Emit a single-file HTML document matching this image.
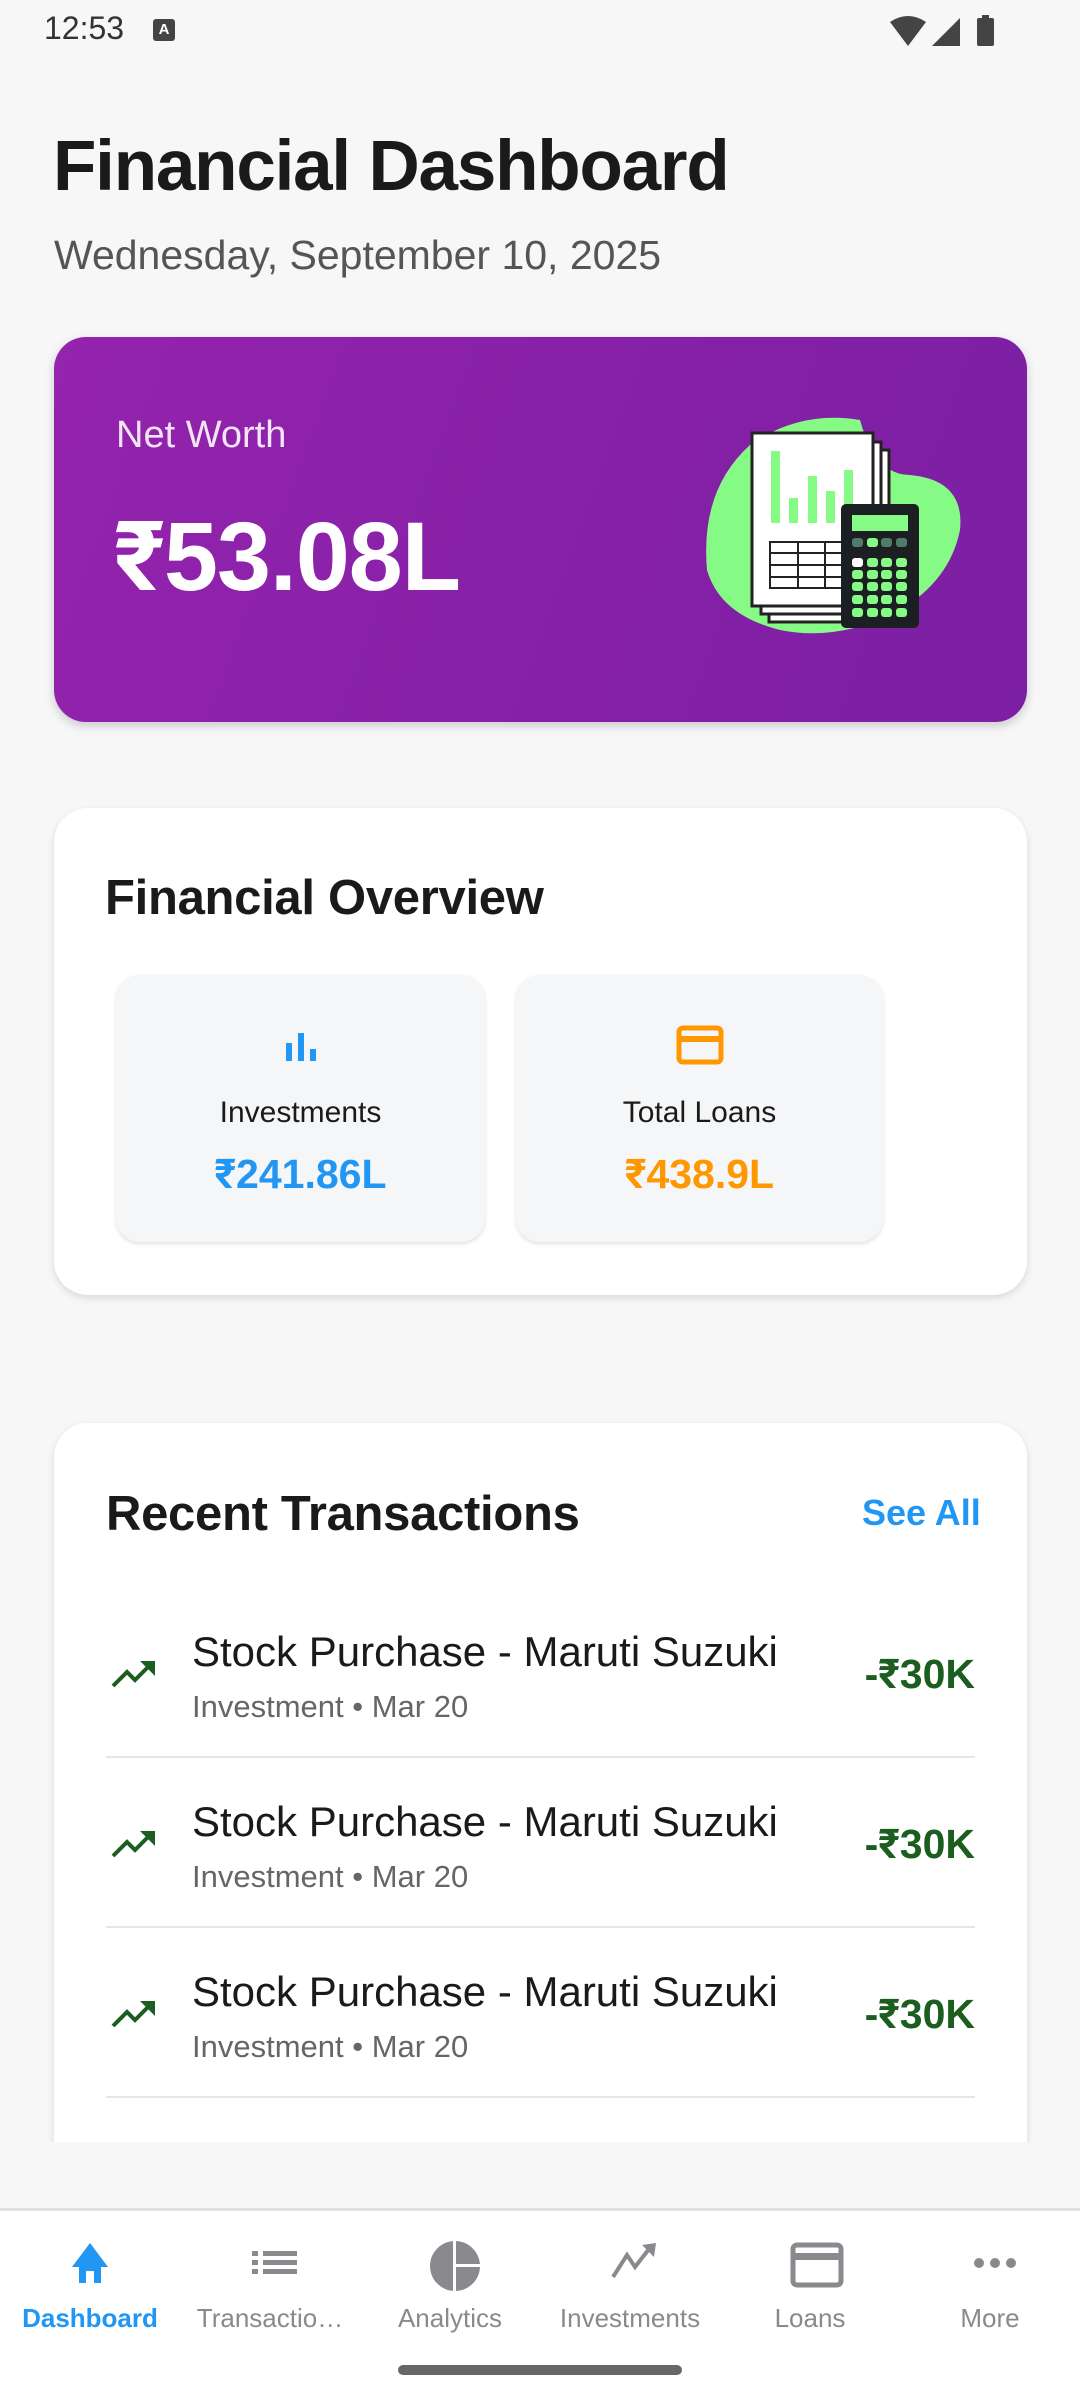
<!DOCTYPE html>
<html><head><meta charset="utf-8"><style>
*{margin:0;padding:0;box-sizing:border-box}
body{width:1080px;height:2400px;background:#f7f7f8;font-family:"Liberation Sans",Roboto,sans-serif;position:relative;overflow:hidden;color:#1a1a1a}
.abs{position:absolute}
.card{position:absolute;background:#fff;border-radius:34px;box-shadow:0 3px 8px rgba(0,0,0,.12)}
.box{position:absolute;background:#f5f6f8;border-radius:24px;box-shadow:0 2px 4px rgba(0,0,0,.12);text-align:center}
.row{position:absolute;left:54px;width:973px;height:170px}
.row .t{position:absolute;left:138px;top:40px;font-size:42px;color:#1a1a1a}
.row .s{position:absolute;left:138px;top:101px;font-size:31px;color:#666}
.row .a{position:absolute;right:52px;top:63px;font-size:41px;font-weight:bold;color:#1b5e20}
.row .i{position:absolute;left:56px;top:72px}
.row .d{position:absolute;left:52px;right:52px;bottom:0;height:2px;background:#e6e6e6}
.nav{position:absolute;top:2208px;left:0;width:1080px;height:192px;background:#fff;border-top:3px solid #e0e0e0}
.ni{position:absolute;top:0;width:180px;text-align:center}
.ni svg{position:absolute;left:70px;top:30px}
.ni span{position:absolute;top:92px;left:0;width:180px;font-size:26px;color:#8a8a8e}
</style></head><body>
<div class="abs" style="left:44px;top:10px;font-size:32px;color:#333">12:53</div>
<div class="abs" style="left:153px;top:19px;width:22px;height:22px;background:#444;border-radius:3px;color:#fff;font-size:15px;font-weight:bold;text-align:center;line-height:22px">A</div>
<svg class="abs" style="left:888px;top:14px" width="120" height="34" viewBox="0 0 120 34"><path d="M2 8 Q20 -4 38 8 L20 32Z" fill="#444"/><path d="M44 32 L72 4 L72 32Z" fill="#444"/><rect x="89" y="4" width="17" height="28" rx="2" fill="#444"/><rect x="94" y="1" width="7" height="4" fill="#444"/></svg>

<div class="abs" style="left:53px;top:126px;font-size:71px;font-weight:bold;letter-spacing:-1.2px">Financial Dashboard</div>
<div class="abs" style="left:54px;top:232px;font-size:41px;color:#555">Wednesday, September 10, 2025</div>

<div class="abs" style="left:54px;top:337px;width:973px;height:385px;border-radius:32px;background:linear-gradient(110deg,#9423ad,#7b1fa2);box-shadow:0 4px 10px rgba(0,0,0,.18)"></div>
<div class="abs" style="left:116px;top:414px;font-size:38px;color:#f3e5f5">Net Worth</div>
<div class="abs" style="left:114px;top:500px;font-size:97px;font-weight:bold;color:#fff;letter-spacing:-1px">₹53.08L</div>
<svg class="abs" style="left:680px;top:380px" width="320" height="280" viewBox="0 0 320 280">
<path d="M70 65 Q120 30 180 40 Q195 95 230 95 Q285 100 280 150 Q270 200 220 230 Q160 262 100 250 Q40 235 27 190 Q20 110 70 65Z" fill="#85fa85"/>
<rect x="89" y="70" width="120" height="172" fill="#fff" stroke="#222" stroke-width="3"/>
<rect x="81" y="62" width="120" height="172" fill="#fff" stroke="#222" stroke-width="3"/>
<rect x="72" y="53" width="121" height="173" fill="#fff" stroke="#222" stroke-width="3"/>
<rect x="91" y="71" width="9" height="72" fill="#85fa85"/><rect x="109" y="118" width="9" height="25" fill="#85fa85"/><rect x="128" y="96" width="9" height="47" fill="#85fa85"/><rect x="146" y="111" width="9" height="32" fill="#85fa85"/><rect x="164" y="90" width="9" height="53" fill="#85fa85"/>
<g stroke="#222" stroke-width="2" fill="none"><rect x="90" y="162" width="90" height="46"/><line x1="90" y1="173" x2="180" y2="173"/><line x1="90" y1="185" x2="180" y2="185"/><line x1="90" y1="197" x2="180" y2="197"/><line x1="118" y1="162" x2="118" y2="208"/><line x1="145" y1="162" x2="145" y2="208"/></g>
<rect x="161" y="124" width="78" height="124" rx="5" fill="#1b1f22"/>
<rect x="172" y="135" width="56" height="16" fill="#85fa85"/>
<g fill="#4f7a6c"><rect x="172" y="158" width="11" height="9" rx="3"/><rect x="201" y="158" width="11" height="9" rx="3"/><rect x="216" y="158" width="11" height="9" rx="3"/></g>
<rect x="187" y="158" width="11" height="9" rx="3" fill="#85fa85"/>
<g fill="#85fa85">
<rect x="187" y="178" width="11" height="9" rx="3"/><rect x="201" y="178" width="11" height="9" rx="3"/><rect x="216" y="178" width="11" height="9" rx="3"/>
<rect x="172" y="190" width="11" height="9" rx="3"/><rect x="187" y="190" width="11" height="9" rx="3"/><rect x="201" y="190" width="11" height="9" rx="3"/><rect x="216" y="190" width="11" height="9" rx="3"/>
<rect x="172" y="202" width="11" height="9" rx="3"/><rect x="187" y="202" width="11" height="9" rx="3"/><rect x="201" y="202" width="11" height="9" rx="3"/><rect x="216" y="202" width="11" height="9" rx="3"/>
<rect x="172" y="215" width="11" height="9" rx="3"/><rect x="187" y="215" width="11" height="9" rx="3"/><rect x="201" y="215" width="11" height="9" rx="3"/><rect x="216" y="215" width="11" height="9" rx="3"/>
<rect x="172" y="228" width="11" height="9" rx="3"/><rect x="187" y="228" width="11" height="9" rx="3"/><rect x="201" y="228" width="11" height="9" rx="3"/><rect x="216" y="228" width="11" height="9" rx="3"/>
</g>
<rect x="172" y="178" width="11" height="9" rx="3" fill="#fff"/>
</svg>

<div class="card" style="left:54px;top:808px;width:973px;height:487px"></div>
<div class="abs" style="left:105px;top:870px;font-size:49px;font-weight:bold;letter-spacing:-0.3px">Financial Overview</div>
<div class="box" style="left:116px;top:975px;width:369px;height:267px">
<svg style="position:absolute;left:167px;top:54px" width="36" height="36" viewBox="0 0 36 36"><rect x="3" y="14" width="6" height="18" fill="#2196f3"/><rect x="15" y="4" width="6" height="28" fill="#2196f3"/><rect x="27" y="20" width="6" height="12" fill="#2196f3"/></svg>
<div style="position:absolute;top:121px;width:100%;font-size:30px">Investments</div>
<div style="position:absolute;top:176px;width:100%;font-size:41px;font-weight:bold;color:#2196f3">₹241.86L</div></div>
<div class="box" style="left:516px;top:975px;width:367px;height:267px">
<svg style="position:absolute;left:160px;top:50px" width="48" height="40" viewBox="0 0 48 40"><rect x="3" y="3" width="42" height="34" rx="4" fill="none" stroke="#ff9800" stroke-width="5"/><rect x="3" y="11" width="42" height="6" fill="#ff9800"/></svg>
<div style="position:absolute;top:121px;width:100%;font-size:30px">Total Loans</div>
<div style="position:absolute;top:176px;width:100%;font-size:41px;font-weight:bold;color:#ff9800">₹438.9L</div></div>

<div class="card" style="left:54px;top:1423px;width:973px;height:760px;border-radius:34px 34px 0 0"></div>
<div class="abs" style="left:106px;top:1486px;font-size:49px;font-weight:bold;letter-spacing:-0.3px">Recent Transactions</div>
<div class="abs" style="left:862px;top:1492px;font-size:36px;color:#2196f3;font-weight:bold">See All</div>

<div class="row" style="top:1588px"><svg class="i" width="46" height="30" viewBox="0 0 46 30"><path d="M3 26 L17 12 L25 20 L39 6" fill="none" stroke="#1b5e20" stroke-width="4"/><path d="M30 1 L45 1 L45 16Z" fill="#1b5e20"/></svg><div class="t">Stock Purchase - Maruti Suzuki</div><div class="s">Investment • Mar 20</div><div class="a">-₹30K</div><div class="d"></div></div>
<div class="row" style="top:1758px"><svg class="i" width="46" height="30" viewBox="0 0 46 30"><path d="M3 26 L17 12 L25 20 L39 6" fill="none" stroke="#1b5e20" stroke-width="4"/><path d="M30 1 L45 1 L45 16Z" fill="#1b5e20"/></svg><div class="t">Stock Purchase - Maruti Suzuki</div><div class="s">Investment • Mar 20</div><div class="a">-₹30K</div><div class="d"></div></div>
<div class="row" style="top:1928px"><svg class="i" width="46" height="30" viewBox="0 0 46 30"><path d="M3 26 L17 12 L25 20 L39 6" fill="none" stroke="#1b5e20" stroke-width="4"/><path d="M30 1 L45 1 L45 16Z" fill="#1b5e20"/></svg><div class="t">Stock Purchase - Maruti Suzuki</div><div class="s">Investment • Mar 20</div><div class="a">-₹30K</div><div class="d"></div></div>
<div class="abs" style="left:0;top:2142px;width:1080px;height:70px;background:#f7f7f8"></div>

<div class="nav">
<div class="ni" style="left:0"><svg width="40" height="44" viewBox="0 0 40 44"><path d="M20 2 L38 26 L31 26 L31 42 L24 42 L24 30 L16 30 L16 42 L9 42 L9 26 L2 26Z" fill="#2196f3"/></svg><span style="color:#2196f3;font-weight:bold">Dashboard</span></div>
<div class="ni" style="left:180px"><svg width="50" height="44" viewBox="0 0 50 44"><g fill="#8a8a8e"><rect x="2" y="10" width="6" height="5"/><rect x="13" y="10" width="34" height="5"/><rect x="2" y="19" width="6" height="5"/><rect x="13" y="19" width="34" height="5"/><rect x="2" y="28" width="6" height="5"/><rect x="13" y="28" width="34" height="5"/></g></svg><span>Transactio…</span></div>
<div class="ni" style="left:360px"><svg width="50" height="50" viewBox="0 0 50 50"><circle cx="25" cy="25" r="25" fill="#8a8a8e"/><rect x="23" y="0" width="3" height="50" fill="#fff"/><rect x="26" y="23" width="24" height="3" fill="#fff"/></svg><span>Analytics</span></div>
<div class="ni" style="left:540px"><svg width="50" height="44" viewBox="0 0 50 44"><path d="M3 36 L17 14 L25 26 L39 8" fill="none" stroke="#8a8a8e" stroke-width="4"/><path d="M32 4 L46 2 L44 16Z" fill="#8a8a8e"/></svg><span>Investments</span></div>
<div class="ni" style="left:720px"><svg width="54" height="48" viewBox="0 0 54 48"><rect x="3" y="4" width="48" height="40" rx="4" fill="none" stroke="#8a8a8e" stroke-width="5"/><rect x="3" y="12" width="48" height="7" fill="#8a8a8e"/></svg><span>Loans</span></div>
<div class="ni" style="left:900px"><svg width="50" height="44" viewBox="0 0 50 44"><g fill="#8a8a8e"><circle cx="9" cy="22" r="5"/><circle cx="25" cy="22" r="5"/><circle cx="41" cy="22" r="5"/></g></svg><span>More</span></div>
<div class="abs" style="left:398px;top:154px;width:284px;height:10px;border-radius:5px;background:#666"></div>
</div>
</body></html>
